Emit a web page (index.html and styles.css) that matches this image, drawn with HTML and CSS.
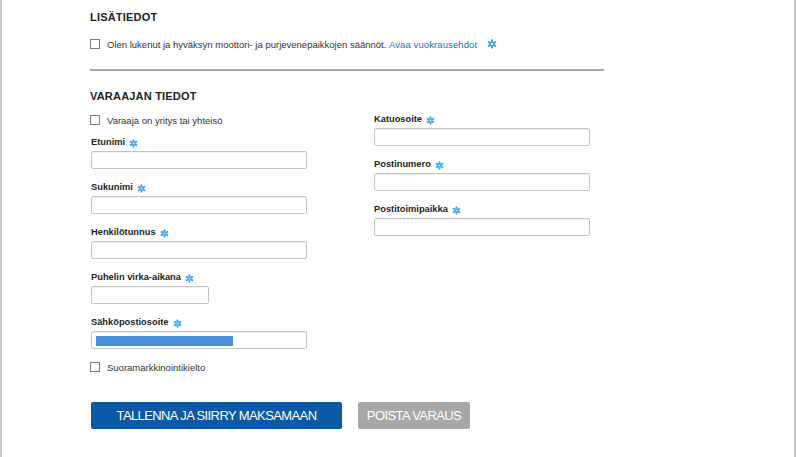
FILE: index.html
```html
<!DOCTYPE html>
<html lang="fi">
<head>
<meta charset="utf-8">
<title>Varaajan tiedot</title>
<link rel="stylesheet" href="styles.css">
</head>
<body>
<div class="page">
  <h2 class="title">LISÄTIEDOT</h2>
  <label class="check terms">
    <input type="checkbox">
    <span>Olen lukenut ja hyväksyn moottori- ja purjevenepaikkojen säännöt. <a class="link" href="#">Avaa vuokrausehdot</a></span>
    <svg class="star star-terms" viewBox="0 0 10 10" aria-hidden="true"><g stroke="#4aa6e6" stroke-width="2.3" stroke-linecap="round"><line x1="5" y1="1.4" x2="5" y2="8.6"/><line x1="1.9" y1="3.2" x2="8.1" y2="6.8"/><line x1="1.9" y1="6.8" x2="8.1" y2="3.2"/></g><circle cx="5" cy="5" r="0.9" fill="#fff"/></svg>
  </label>
  <hr class="divider">
  <h2 class="title title-2">VARAAJAN TIEDOT</h2>
  <div class="cols">
    <div class="col col-left">
      <label class="check">
        <input type="checkbox">
        <span>Varaaja on yritys tai yhteisö</span>
      </label>
      <div class="field">
        <div class="label">Etunimi <svg class="star" viewBox="0 0 10 10" aria-hidden="true"><g stroke="#4aa6e6" stroke-width="2.3" stroke-linecap="round"><line x1="5" y1="1.4" x2="5" y2="8.6"/><line x1="1.9" y1="3.2" x2="8.1" y2="6.8"/><line x1="1.9" y1="6.8" x2="8.1" y2="3.2"/></g><circle cx="5" cy="5" r="0.9" fill="#fff"/></svg></div>
        <input class="input" type="text">
      </div>
      <div class="field">
        <div class="label">Sukunimi <svg class="star" viewBox="0 0 10 10" aria-hidden="true"><g stroke="#4aa6e6" stroke-width="2.3" stroke-linecap="round"><line x1="5" y1="1.4" x2="5" y2="8.6"/><line x1="1.9" y1="3.2" x2="8.1" y2="6.8"/><line x1="1.9" y1="6.8" x2="8.1" y2="3.2"/></g><circle cx="5" cy="5" r="0.9" fill="#fff"/></svg></div>
        <input class="input" type="text">
      </div>
      <div class="field">
        <div class="label">Henkilötunnus <svg class="star" viewBox="0 0 10 10" aria-hidden="true"><g stroke="#4aa6e6" stroke-width="2.3" stroke-linecap="round"><line x1="5" y1="1.4" x2="5" y2="8.6"/><line x1="1.9" y1="3.2" x2="8.1" y2="6.8"/><line x1="1.9" y1="6.8" x2="8.1" y2="3.2"/></g><circle cx="5" cy="5" r="0.9" fill="#fff"/></svg></div>
        <input class="input" type="text">
      </div>
      <div class="field">
        <div class="label">Puhelin virka-aikana <svg class="star" viewBox="0 0 10 10" aria-hidden="true"><g stroke="#4aa6e6" stroke-width="2.3" stroke-linecap="round"><line x1="5" y1="1.4" x2="5" y2="8.6"/><line x1="1.9" y1="3.2" x2="8.1" y2="6.8"/><line x1="1.9" y1="6.8" x2="8.1" y2="3.2"/></g><circle cx="5" cy="5" r="0.9" fill="#fff"/></svg></div>
        <input class="input input-short" type="text">
      </div>
      <div class="field">
        <div class="label">Sähköpostiosoite <svg class="star" viewBox="0 0 10 10" aria-hidden="true"><g stroke="#4aa6e6" stroke-width="2.3" stroke-linecap="round"><line x1="5" y1="1.4" x2="5" y2="8.6"/><line x1="1.9" y1="3.2" x2="8.1" y2="6.8"/><line x1="1.9" y1="6.8" x2="8.1" y2="3.2"/></g><circle cx="5" cy="5" r="0.9" fill="#fff"/></svg></div>
        <div class="input input-filled"><span class="redact"></span></div>
      </div>
      <label class="check">
        <input type="checkbox">
        <span>Suoramarkkinointikielto</span>
      </label>
    </div>
    <div class="col col-right">
      <div class="field">
        <div class="label">Katuosoite <svg class="star" viewBox="0 0 10 10" aria-hidden="true"><g stroke="#4aa6e6" stroke-width="2.3" stroke-linecap="round"><line x1="5" y1="1.4" x2="5" y2="8.6"/><line x1="1.9" y1="3.2" x2="8.1" y2="6.8"/><line x1="1.9" y1="6.8" x2="8.1" y2="3.2"/></g><circle cx="5" cy="5" r="0.9" fill="#fff"/></svg></div>
        <input class="input" type="text">
      </div>
      <div class="field">
        <div class="label">Postinumero <svg class="star" viewBox="0 0 10 10" aria-hidden="true"><g stroke="#4aa6e6" stroke-width="2.3" stroke-linecap="round"><line x1="5" y1="1.4" x2="5" y2="8.6"/><line x1="1.9" y1="3.2" x2="8.1" y2="6.8"/><line x1="1.9" y1="6.8" x2="8.1" y2="3.2"/></g><circle cx="5" cy="5" r="0.9" fill="#fff"/></svg></div>
        <input class="input" type="text">
      </div>
      <div class="field">
        <div class="label">Postitoimipaikka <svg class="star" viewBox="0 0 10 10" aria-hidden="true"><g stroke="#4aa6e6" stroke-width="2.3" stroke-linecap="round"><line x1="5" y1="1.4" x2="5" y2="8.6"/><line x1="1.9" y1="3.2" x2="8.1" y2="6.8"/><line x1="1.9" y1="6.8" x2="8.1" y2="3.2"/></g><circle cx="5" cy="5" r="0.9" fill="#fff"/></svg></div>
        <input class="input" type="text">
      </div>
    </div>
  </div>
  <div class="actions">
    <button class="btn btn-primary" type="button">TALLENNA JA SIIRRY MAKSAMAAN</button>
    <button class="btn btn-secondary" type="button">POISTA VARAUS</button>
  </div>
</div>
</body>
</html>
```
FILE: styles.css
```css
html, body {
  margin: 0;
  padding: 0;
  background: #fff;
}

body {
  font-family: "Liberation Sans", Arial, sans-serif;
  color: #222;
}

.page {
  box-sizing: border-box;
  width: 796px;
  height: 457px;
  border-left: 2px solid #c9c9c9;
  border-right: 2px solid #c9c9c9;
  padding: 10px 0 0 88px;
  overflow: hidden;
}

.title {
  margin: 0;
  font-size: 11px;
  line-height: 14px;
  font-weight: bold;
  letter-spacing: 0.2px;
  color: #222;
}

.title-2 {
  margin-top: 18px;
}

.check {
  display: flex;
  align-items: center;
  gap: 7px;
  height: 12px;
  font-size: 9.5px;
  color: #333;
  white-space: nowrap;
}

.check input {
  appearance: none;
  -webkit-appearance: none;
  box-sizing: border-box;
  flex: none;
  width: 10px;
  height: 10px;
  margin: 0;
  border: 1px solid #7d7d7d;
  background: #fff;
}

.terms {
  margin-top: 14px;
}

.link {
  color: #1c6fc0;
  text-decoration: none;
  letter-spacing: 0.1px;
}

.star {
  width: 9px;
  height: 9px;
  flex: none;
}

.star-terms {
  width: 10px;
  height: 10px;
  margin-left: 3px;
  margin-top: -1px;
}

.divider {
  width: 514px;
  margin: 19px 0 0;
  border: 0;
  border-top: 2px solid #a6a6a6;
  height: 0;
}

.cols {
  display: grid;
  grid-template-columns: 283px 220px;
}

.col-left {
  padding-top: 11px;
}

.col-right {
  padding-top: 9px;
}

.col-left .check + .field {
  margin-top: 9px;
}

.field + .field {
  margin-top: 11px;
}

.field + .check {
  margin-top: 12px;
}

.field {
  padding-left: 1px;
}

.label {
  display: flex;
  align-items: center;
  gap: 4px;
  height: 14px;
  margin-bottom: 2px;
  font-size: 9.3px;
  font-weight: bold;
  color: #222;
  white-space: nowrap;
}

.label .star {
  margin-top: 2px;
}

.input {
  display: block;
  box-sizing: border-box;
  width: 216px;
  height: 18px;
  margin: 0;
  padding: 0;
  border: 1px solid #c4c4c4;
  border-radius: 2px;
  background: #fff;
  box-shadow: inset 0 1px 1px rgba(0, 0, 0, 0.06);
  font: inherit;
}

.input-short {
  width: 118px;
}

.input-filled {
  padding: 4px 0 0 4px;
}

.redact {
  display: block;
  width: 137px;
  height: 10px;
  background: #4a8fd8;
}

.actions {
  display: flex;
  gap: 16px;
  margin-top: 29px;
  padding-left: 1px;
}

.btn {
  height: 27px;
  padding: 0;
  border: 0;
  border-radius: 2px;
  color: #fff;
  font-family: "Liberation Sans", Arial, sans-serif;
  font-size: 13px;
  letter-spacing: -0.6px;
  cursor: pointer;
}

.btn-primary {
  width: 251px;
  background: #0c5aa5;
}

.btn-secondary {
  width: 112px;
  background: #a8a8a8;
}
```
